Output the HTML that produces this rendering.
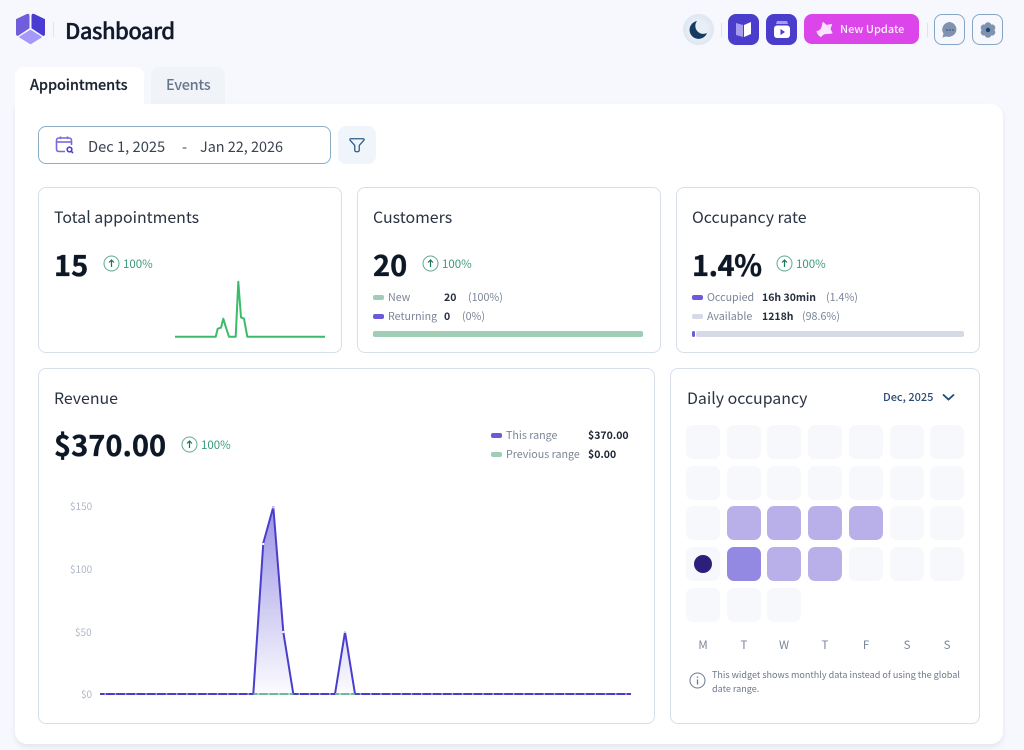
<!DOCTYPE html>
<html><head><meta charset="utf-8">
<style>
html,body{margin:0;padding:0}
body{width:1024px;height:750px;overflow:hidden;background:#f6f8fd;position:relative;font-family:"Noto Sans CJK JP","Liberation Sans",sans-serif;color:#1c2433}
div,span,svg{position:absolute;box-sizing:border-box}
.t{white-space:nowrap;line-height:1}
.card{background:#fff;border:1px solid #d8dfeb;border-radius:8px}
.title{font-size:15.9px;color:#2a3342;font-weight:400}
.big{font-weight:700;color:#0e1726;font-size:29px;-webkit-text-stroke:.35px #0e1726}
.pct{font-size:11.5px;color:#3c9a78}
.lg{font-size:10.7px;color:#7a8598}
.v{font-size:10.5px;color:#262f3e;font-weight:700}
.sw{width:11px;height:5px;border-radius:2px}
.c{width:34px;height:34px;border-radius:7px;background:#f7f8fc}
.ax{font-size:10px;color:#adb5c6}
.d{font-size:11.5px;color:#7a8598;width:34px;text-align:center}
</style></head><body>

<svg style="left:15px;top:13px" width="32" height="32" viewBox="0 0 32 32">
<path d="M1.500 6.500 L12 1.500 Q14 0.500 14 3 V15 L3.500 22 Q1.500 23 1.500 21Z" fill="#6f5ddc" stroke="#6f5ddc" stroke-linejoin="round"/>
<path d="M29.500 6.500 L19 1.500 Q17 0.500 17 3 V15 L27.500 22 Q29.500 23 29.500 21Z" fill="#4a3bd2" stroke="#4a3bd2" stroke-linejoin="round"/>
<path d="M15.500 17.500 L26 24 L15.500 30.500 L5 24Z" fill="#a698f8" stroke="#a698f8" stroke-width="1.500" stroke-linejoin="round"/>
</svg>
<div style="left:53px;top:22px;width:1px;height:15px;background:#e1e5ec"></div>
<div class="t" style="left:65px;top:19px;font-size:22px;font-weight:500;letter-spacing:-.55px;color:#111a2b;-webkit-text-stroke:.35px #111a2b">Dashboard</div>

<div style="left:683px;top:14px;width:31px;height:31px;border-radius:50%;background:radial-gradient(circle,#e8eef6 40%,#d3e0ee 100%)"></div>
<svg style="left:689px;top:20px" width="20" height="20" viewBox="0 0 20 20"><path d="M8 1 A9 9 0 1 0 18 13 A8 8 0 0 1 8 1Z" fill="#173a63"/></svg>
<div style="left:721px;top:23px;width:1px;height:14px;background:#dfe4ec"></div>
<div style="left:728px;top:14px;width:31px;height:31px;border-radius:8px;background:#4b3dcc"></div>
<svg style="left:735px;top:21px" width="17" height="17" viewBox="0 0 17 17"><path d="M1 2 L8 4 V16 L1 14Z" fill="#a79df0"/><path d="M9 4 L16 1 V13 L9 16Z" fill="#fff"/></svg>
<div style="left:766px;top:14px;width:31px;height:31px;border-radius:8px;background:#4b3dcc"></div>
<svg style="left:773px;top:20px" width="18" height="19" viewBox="0 0 18 19"><path d="M4 1 H14 L15 4 H3Z" fill="#a79df0"/><rect x="1" y="5.500" width="16" height="12.500" rx="3" fill="#fff"/><path d="M7.500 9 L12 12 L7.500 15Z" fill="#4b3dcc"/></svg>
<div style="left:804px;top:14px;width:115px;height:30px;border-radius:8px;background:#db45ea"></div>
<svg style="left:816px;top:21px" width="17" height="17" viewBox="0 0 17 17"><path d="M7 1.500 L10.500 4.500 L15.500 3.500 L14 8 L16 12 L11.500 12.500 Q7 12 5 15.500 Q2 14 1 10.500 Q5 10 6 6Z" fill="#fbe3fd" stroke="#fbe3fd" stroke-width="1" stroke-linejoin="round"/></svg>
<div class="t" style="left:840px;top:24px;font-size:11px;font-weight:500;color:#fdeefe">New Update</div>
<div style="left:927px;top:23px;width:1px;height:14px;background:#dfe4ec"></div>
<div style="left:934px;top:14px;width:31px;height:31px;border-radius:8px;border:1px solid #86a5c4"></div>
<svg style="left:941px;top:21px" width="18" height="18" viewBox="0 0 18 18"><path d="M9 1 A8 7.500 0 1 1 5 15.500 L1.500 16.500 L2.500 12.500 A8 7.500 0 0 1 9 1Z" fill="#7f93b0"/><circle cx="6" cy="9" r=".8" fill="#2d4a70"/><circle cx="9" cy="9" r=".8" fill="#2d4a70"/><circle cx="12" cy="9" r=".8" fill="#2d4a70"/></svg>
<div style="left:972px;top:14px;width:31px;height:31px;border-radius:8px;border:1px solid #86a5c4"></div>
<svg style="left:979px;top:21px" width="18" height="18" viewBox="0 0 18 18"><g fill="#7f93b0"><circle cx="9" cy="4.500" r="3.300"/><circle cx="9" cy="13.500" r="3.300"/><circle cx="5" cy="6.700" r="3.300"/><circle cx="13" cy="6.700" r="3.300"/><circle cx="5" cy="11.300" r="3.300"/><circle cx="13" cy="11.300" r="3.300"/></g><circle cx="9" cy="9" r="2.200" fill="#1d4275"/></svg>

<div style="left:15px;top:67px;width:129px;height:45px;background:#fff;border-radius:9px 9px 0 0"></div>
<div style="left:151px;top:67px;width:74px;height:37px;background:#f0f3f8;border-radius:9px 9px 0 0"></div>
<div style="left:15px;top:104px;width:988px;height:640px;background:#fff;border-radius:0 12px 12px 12px;box-shadow:0 3px 5px rgba(190,198,212,.35)"></div>
<div class="t" style="left:30px;top:78px;font-size:14.5px;font-weight:500;letter-spacing:-.1px;color:#1c2433;-webkit-text-stroke:.2px #1c2433">Appointments</div>
<div class="t" style="left:166px;top:78px;font-size:14.5px;font-weight:500;letter-spacing:-.3px;color:#66758c">Events</div>

<div style="left:38px;top:126px;width:293px;height:38px;border:1px solid #8cadc6;border-radius:8px;background:#fff"></div>
<svg style="left:55px;top:136px" width="20" height="19" viewBox="0 0 20 19" fill="none" stroke="#7d68d8" stroke-width="1.600"><path d="M10 15.500 H4 Q1.500 15.500 1.500 13 V4.500 Q1.500 2 4 2 H14 Q16.500 2 16.500 4.500 V9"/><path d="M1.500 6 H16.500"/><path d="M5.500 .5 V3 M12.500 .5 V3"/><circle cx="14.500" cy="13.500" r="2.300" stroke="#4d3fcf"/><path d="M16.200 15.200 L18 17" stroke="#4d3fcf"/></svg>
<div class="t" style="left:88px;top:140px;font-size:14.7px;color:#3a4352">Dec 1, 2025</div>
<div class="t" style="left:182px;top:140px;font-size:14.7px;color:#3a4352">-</div>
<div class="t" style="left:200px;top:140px;font-size:14.4px;color:#3a4352">Jan 22, 2026</div>
<div style="left:338px;top:126px;width:38px;height:38px;border-radius:8px;background:#f0f5fc"></div>
<svg style="left:348px;top:137px" width="18" height="16" viewBox="0 0 20 17" fill="none" stroke="#2d5a85" stroke-width="1.400" stroke-linejoin="round"><path d="M3 1.500 H17 Q18.500 1.500 17.700 3.200 L12.500 9 V14 Q12.500 16 10 16 Q7.500 16 7.500 14 V9 L2.300 3.200 Q1.500 1.500 3 1.500Z"/></svg>

<!-- card 1 -->
<div class="card" style="left:38px;top:187px;width:304px;height:166px"></div>
<div class="t title" style="left:54px;top:209px">Total appointments</div>
<div class="t big" style="left:54px;top:250px">15</div>
<svg style="left:103px;top:255px" width="17" height="17" viewBox="0 0 17 17" fill="none" stroke="#5fa98d"><circle cx="8.500" cy="8.500" r="7.500"/><path d="M8.500 12 V5.500 M6 7.500 L8.500 5 L11 7.500" stroke="#20735a" stroke-width="1.200"/></svg>
<div class="t pct" style="left:123px;top:259px">100%</div>
<svg style="left:170px;top:275px" width="160" height="70" viewBox="170 275 160 70"><path d="M175 336.700 H215.700 L217.700 328.700 L221 327.700 L223.300 318.700 L225.700 326.700 L229 336.700 H235.700 L238.300 281.700 L241 317.300 L244 318.700 L247.300 336.700 H325" fill="none" stroke="#3dba6a" stroke-width="2" stroke-linejoin="round"/></svg>

<!-- card 2 -->
<div class="card" style="left:357px;top:187px;width:304px;height:166px"></div>
<div class="t title" style="left:373px;top:209px">Customers</div>
<div class="t big" style="left:373px;top:250px">20</div>
<svg style="left:422px;top:255px" width="17" height="17" viewBox="0 0 17 17" fill="none" stroke="#5fa98d"><circle cx="8.500" cy="8.500" r="7.500"/><path d="M8.500 12 V5.500 M6 7.500 L8.500 5 L11 7.500" stroke="#20735a" stroke-width="1.200"/></svg>
<div class="t pct" style="left:442px;top:259px">100%</div>
<div class="sw" style="left:373px;top:295px;background:#9fcdb6"></div>
<div class="t lg" style="left:388px;top:293px">New</div>
<div class="t v" style="left:444px;top:293px">20</div>
<div class="t lg" style="left:468px;top:293px">(100%)</div>
<div class="sw" style="left:373px;top:314px;background:#6b5bd8"></div>
<div class="t lg" style="left:388px;top:312px">Returning</div>
<div class="t v" style="left:444px;top:312px">0</div>
<div class="t lg" style="left:462px;top:312px">(0%)</div>
<div style="left:373px;top:331px;width:270px;height:6px;border-radius:2px;background:#9fcdb6"></div>

<!-- card 3 -->
<div class="card" style="left:676px;top:187px;width:304px;height:166px"></div>
<div class="t title" style="left:692px;top:209px">Occupancy rate</div>
<div class="t big" style="left:692px;top:250px;letter-spacing:-.5px">1.4%</div>
<svg style="left:776px;top:255px" width="17" height="17" viewBox="0 0 17 17" fill="none" stroke="#5fa98d"><circle cx="8.500" cy="8.500" r="7.500"/><path d="M8.500 12 V5.500 M6 7.500 L8.500 5 L11 7.500" stroke="#20735a" stroke-width="1.200"/></svg>
<div class="t pct" style="left:796px;top:259px">100%</div>
<div class="sw" style="left:692px;top:295px;background:#6b5bd8"></div>
<div class="t lg" style="left:707px;top:293px">Occupied</div>
<div class="t v" style="left:762px;top:293px">16h 30min</div>
<div class="t lg" style="left:826px;top:293px">(1.4%)</div>
<div class="sw" style="left:692px;top:314px;background:#d5dae5"></div>
<div class="t lg" style="left:707px;top:312px">Available</div>
<div class="t v" style="left:762px;top:312px">1218h</div>
<div class="t lg" style="left:802px;top:312px">(98.6%)</div>
<div style="left:696px;top:331px;width:268px;height:6px;border-radius:2px;background:#d5dae5"></div>
<div style="left:692px;top:331px;width:3px;height:6px;border-radius:2px;background:#6b5bd8"></div>

<!-- revenue -->
<div class="card" style="left:38px;top:368px;width:617px;height:356px"></div>
<div class="t title" style="left:54px;top:390px">Revenue</div>
<div class="t big" style="left:54px;top:430px">$370.00</div>
<svg style="left:181px;top:436px" width="17" height="17" viewBox="0 0 17 17" fill="none" stroke="#5fa98d"><circle cx="8.500" cy="8.500" r="7.500"/><path d="M8.500 12 V5.500 M6 7.500 L8.500 5 L11 7.500" stroke="#20735a" stroke-width="1.200"/></svg>
<div class="t pct" style="left:201px;top:440px">100%</div>
<div class="sw" style="left:491px;top:433px;background:#6b5bd8"></div>
<div class="t lg" style="left:506px;top:431px">This range</div>
<div class="t v" style="left:588px;top:431px;color:#1c2433">$370.00</div>
<div class="sw" style="left:491px;top:452px;background:#9fcdb6"></div>
<div class="t lg" style="left:506px;top:450px">Previous range</div>
<div class="t v" style="left:588px;top:450px;color:#1c2433">$0.00</div>

<div class="t ax" style="left:70px;top:501px">$150</div>
<div class="t ax" style="left:70px;top:564px">$100</div>
<div class="t ax" style="left:75px;top:627px">$50</div>
<div class="t ax" style="left:81px;top:689px">$0</div>

<svg style="left:90px;top:495px" width="550" height="210" viewBox="90 495 550 210">
<defs><linearGradient id="g2" gradientUnits="userSpaceOnUse" x1="0" y1="507" x2="0" y2="694"><stop offset="0" stop-color="#8a80e0" stop-opacity=".85"/><stop offset="1" stop-color="#8a80e0" stop-opacity=".03"/></linearGradient></defs>
<path d="M253.300 694 L263.300 543 L273.300 507 L283.300 632 L293.300 694Z M335 694 L345 632 L355 694Z" fill="url(#g2)"/>
<path d="M100 694 H253.300 L263.300 543 L273.300 507 L283.300 632 L293.300 694 H335 L345 632 L355 694 H631" fill="none" stroke="#4a3dcb" stroke-width="2" stroke-linejoin="round"/>
<path d="M253.300 694 H293.300 M335 694 H355" stroke="#54b487" stroke-width="1.800"/>
<path d="M100 694 H631" stroke="#fff" stroke-width="1" stroke-dasharray="1.500 8.710" stroke-dashoffset="-4.500"/>
<circle cx="263.300" cy="544" r="1.100" fill="#fff"/><circle cx="273.300" cy="507.500" r="1.100" fill="#d8d4f7"/><circle cx="283.300" cy="632" r="1.100" fill="#fff"/><circle cx="345" cy="632" r="1.100" fill="#d8d4f7"/>
</svg>

<!-- daily -->
<div class="card" style="left:670px;top:368px;width:310px;height:356px"></div>
<div class="t title" style="left:687px;top:390px">Daily occupancy</div>
<div class="t" style="left:883px;top:392px;font-size:11px;font-weight:500;color:#2b4a70">Dec, 2025</div>
<svg style="left:941px;top:392px" width="15" height="10" viewBox="0 0 15 10"><path d="M2 2.500 L7.500 7.500 L13 2.500" fill="none" stroke="#1f4a74" stroke-width="1.800"/></svg>

<div class="c" style="left:686px;top:425px"></div><div class="c" style="left:727px;top:425px"></div><div class="c" style="left:767px;top:425px"></div><div class="c" style="left:808px;top:425px"></div><div class="c" style="left:849px;top:425px"></div><div class="c" style="left:890px;top:425px"></div><div class="c" style="left:930px;top:425px"></div>
<div class="c" style="left:686px;top:466px"></div><div class="c" style="left:727px;top:466px"></div><div class="c" style="left:767px;top:466px"></div><div class="c" style="left:808px;top:466px"></div><div class="c" style="left:849px;top:466px"></div><div class="c" style="left:890px;top:466px"></div><div class="c" style="left:930px;top:466px"></div>
<div class="c" style="left:686px;top:506px"></div><div class="c" style="left:727px;top:506px;background:#b9b0ea"></div><div class="c" style="left:767px;top:506px;background:#b9b0ea"></div><div class="c" style="left:808px;top:506px;background:#b9b0ea"></div><div class="c" style="left:849px;top:506px;background:#b9b0ea"></div><div class="c" style="left:890px;top:506px"></div><div class="c" style="left:930px;top:506px"></div>
<div class="c" style="left:686px;top:547px"></div><div class="c" style="left:727px;top:547px;background:#9389e3"></div><div class="c" style="left:767px;top:547px;background:#b9b0ea"></div><div class="c" style="left:808px;top:547px;background:#b9b0ea"></div><div class="c" style="left:849px;top:547px"></div><div class="c" style="left:890px;top:547px"></div><div class="c" style="left:930px;top:547px"></div>
<div class="c" style="left:686px;top:588px"></div><div class="c" style="left:727px;top:588px"></div><div class="c" style="left:767px;top:588px"></div>
<div style="left:694px;top:555px;width:18px;height:18px;border-radius:50%;background:#2c1f7c"></div>

<div class="t d" style="left:686px;top:640px">M</div><div class="t d" style="left:727px;top:640px">T</div><div class="t d" style="left:767px;top:640px">W</div><div class="t d" style="left:808px;top:640px">T</div><div class="t d" style="left:849px;top:640px">F</div><div class="t d" style="left:890px;top:640px">S</div><div class="t d" style="left:930px;top:640px">S</div>

<svg style="left:689px;top:672px" width="17" height="17" viewBox="0 0 17 17" fill="none" stroke="#6d788b"><circle cx="8.500" cy="8.500" r="7.500"/><path d="M8.500 7.500 V12.500" stroke-width="1.300"/><circle cx="8.500" cy="5" r=".8" fill="#6d788b" stroke="none"/></svg>
<div class="t" style="left:712px;top:670px;font-size:9.06px;color:#6d788b">This widget shows monthly data instead of using the global</div>
<div class="t" style="left:712px;top:684px;font-size:9.06px;color:#6d788b">date range.</div>

</body></html>
